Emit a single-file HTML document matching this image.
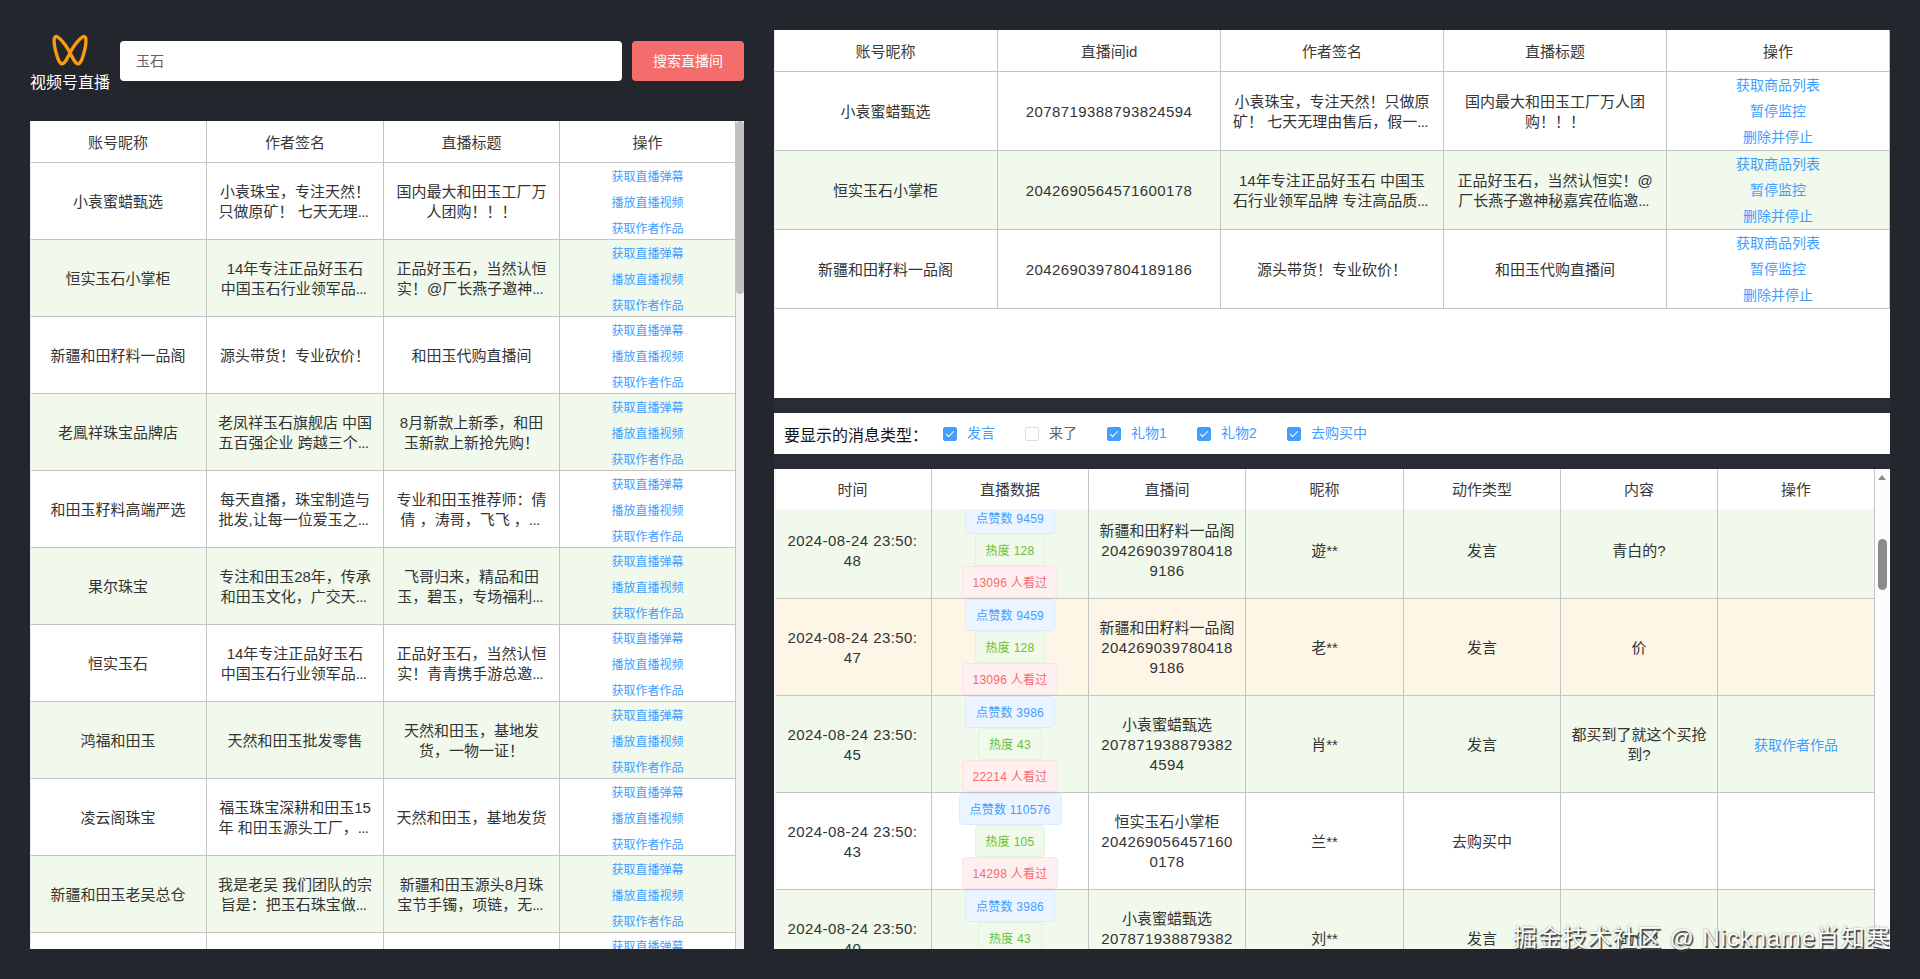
<!DOCTYPE html>
<html lang="zh-CN"><head><meta charset="utf-8"><title>视频号直播</title>
<style>
*{box-sizing:border-box;margin:0;padding:0}
html,body{width:1920px;height:979px;overflow:hidden;background:#24262e}
body{font-family:"Liberation Sans","Noto Sans CJK SC",sans-serif;font-size:15px;color:#333;position:relative}
.abs{position:absolute}
#logo{left:45px;top:28px;width:50px;height:44px}
#brand{left:20px;top:71.5px;width:100px;text-align:center;color:#fff;font-size:16px;line-height:22px;white-space:nowrap}
#q{left:120px;top:41px;width:502px;height:40px;background:#fff;border-radius:4px;color:#606266;font-size:14px;line-height:40px;padding-left:16px}
#btn{left:632px;top:41px;width:112px;height:40px;background:#f56c6c;border-radius:4px;color:#fff;font-size:14px;line-height:40px;text-align:center}
.panel{background:#fff;overflow:hidden}
#lp{left:30px;top:121px;width:714px;height:828px}
#rp{left:774px;top:30px;width:1116px;height:368px}
#bar{left:774px;top:413px;width:1116px;height:41px}
#bp{left:774px;top:469px;width:1116px;height:480px}
table{border-collapse:separate;border-spacing:0;table-layout:fixed}
td,th{border-right:1px solid #c4c4c4;border-bottom:1px solid #c4c4c4;text-align:center;vertical-align:middle;font-weight:400;line-height:20px;white-space:nowrap;overflow:hidden;padding:0}
th{color:#3a3a3a}
tr.g td{background:#f0f9eb}
tr.w td{background:#fdf5e6}
a{color:#409eff;text-decoration:none;display:block}
#lt{width:706px;border-left:0}
#lt th{height:42px}
#lt td{height:77px}
#lt a{font-size:12px;line-height:26px;height:26px}
#lt a:last-child{height:24px}
td,th{padding-top:2px}
td.op{padding-top:0}
#lt a{position:relative;top:1px}
#rt{width:1116px}
#rt th{height:42px}
#rt td{height:79px}
#rt a{font-size:14px;line-height:26px}
#bt{width:1101px}
#bth th{height:40px;border-bottom:0}
#bt td{height:97px}
#bt a{font-size:14px}
.tag{letter-spacing:.25px;display:block;height:32px;line-height:33px;font-size:12px;border:1px solid;border-radius:4px;padding:0 10px;margin:0 auto;width:max-content}
.tb{background:#ecf5ff;border-color:#d9ecff;color:#409eff}
.tg{background:#f0f9eb;border-color:#e1f3d8;color:#67c23a}
.tr{background:#fef0f0;border-color:#fde2e2;color:#f56c6c}
.n{letter-spacing:.43px}
i{font-style:normal;letter-spacing:-.6px;margin-right:3px}
.lb{position:absolute;left:0;top:0;width:1px;height:100%;background:#ebeef5}
#barl{left:10px;top:1px;line-height:43px;font-size:16px;color:#111}
.cb{top:14px;width:14px;height:14px;border:1px solid #dcdfe6;border-radius:2px;background:#fff}
.cb.on{background:#409eff;border-color:#409eff}
.cb.on:after{content:"";position:absolute;left:4px;top:1px;width:3px;height:7px;border:1.5px solid #fff;border-left:0;border-top:0;transform:rotate(45deg)}
.cl{top:0;line-height:41px;font-size:14px;color:#606266;white-space:nowrap}
.cl.on{color:#409eff}
#wm{left:1513px;top:922px;font-size:24px;letter-spacing:.85px;line-height:32px;color:#fbfbfb;white-space:nowrap;text-shadow:1.5px 1.5px 1px #3a3a3a,0 0 2px rgba(0,0,0,.4)}
</style></head><body>
<svg class="abs" id="logo" viewBox="0 0 1112 979" fill="none" stroke="#f99c13" stroke-width="74" stroke-linejoin="round"><path d="M370 798C355 794 338.3 776.8 325 758C311.7 739.2 300.5 711.3 290 685C279.5 658.7 273.3 639.2 262 600C250.7 560.8 231.8 500 222 450C212.2 400 205 338.3 203 300C201 261.7 202.2 238.8 210 220C217.8 201.2 231 184.5 250 187C269 189.5 296.7 211.2 324 235C351.3 258.8 385.7 295.8 414 330C442.3 364.2 470.2 402.5 494 440C517.8 477.5 537 518.3 557 555C577 591.7 597.5 630 614 660C630.5 690 641.8 714.7 656 735C670.2 755.3 684.3 771.5 699 782C713.7 792.5 729 802 744 798C759 794 775.7 776.8 789 758C802.3 739.2 813.5 711.3 824 685C834.5 658.7 840.7 639.2 852 600C863.3 560.8 882.2 500 892 450C901.8 400 909 338.3 911 300C913 261.7 911.8 238.8 904 220C896.2 201.2 883 184.5 864 187C845 189.5 817.3 211.2 790 235C762.7 258.8 728.3 295.8 700 330C671.7 364.2 643.8 402.5 620 440C596.2 477.5 577 518.3 557 555C537 591.7 516.5 630 500 660C483.5 690 472.2 714.7 458 735C443.8 755.3 429.7 771.5 415 782C400.3 792.5 385 802 370 798Z"/></svg>
<div class="abs" id="brand">视频号直播</div>
<div class="abs" id="q">玉石</div>
<div class="abs" id="btn">搜索直播间</div>
<div class="abs panel" id="lp">
<table id="lt"><colgroup><col style="width:177px"><col style="width:177px"><col style="width:176px"><col style="width:176px"></colgroup>
<tr><th>账号昵称</th><th>作者签名</th><th>直播标题</th><th>操作</th></tr>
<tr><td>小袁蜜蜡甄选</td><td>小袁珠宝，专注天然！<br>只做原矿！ 七天无理<i>...</i></td><td>国内最大和田玉工厂万<br>人团购！！！</td><td class="op"><a>获取直播弹幕</a><a>播放直播视频</a><a>获取作者作品</a></td></tr>
<tr class="g"><td>恒实玉石小掌柜</td><td>14年专注正品好玉石<br>中国玉石行业领军品<i>...</i></td><td>正品好玉石，当然认恒<br>实！@厂长燕子邀神<i>...</i></td><td class="op"><a>获取直播弹幕</a><a>播放直播视频</a><a>获取作者作品</a></td></tr>
<tr><td>新疆和田籽料一品阁</td><td>源头带货！专业砍价！</td><td>和田玉代购直播间</td><td class="op"><a>获取直播弹幕</a><a>播放直播视频</a><a>获取作者作品</a></td></tr>
<tr class="g"><td>老鳯祥珠宝品牌店</td><td>老凤祥玉石旗舰店 中国<br>五百强企业 跨越三个<i>...</i></td><td>8月新款上新季，和田<br>玉新款上新抢先购！</td><td class="op"><a>获取直播弹幕</a><a>播放直播视频</a><a>获取作者作品</a></td></tr>
<tr><td>和田玉籽料高端严选</td><td>每天直播，珠宝制造与<br>批发,让每一位爱玉之<i>...</i></td><td>专业和田玉推荐师：倩<br>倩 ，涛哥，飞飞 ，<i>...</i></td><td class="op"><a>获取直播弹幕</a><a>播放直播视频</a><a>获取作者作品</a></td></tr>
<tr class="g"><td>果尔珠宝</td><td>专注和田玉28年，传承<br>和田玉文化，广交天<i>...</i></td><td>飞哥归来，精品和田<br>玉，碧玉，专场福利<i>...</i></td><td class="op"><a>获取直播弹幕</a><a>播放直播视频</a><a>获取作者作品</a></td></tr>
<tr><td>恒实玉石</td><td>14年专注正品好玉石<br>中国玉石行业领军品<i>...</i></td><td>正品好玉石，当然认恒<br>实！青青携手游总邀<i>...</i></td><td class="op"><a>获取直播弹幕</a><a>播放直播视频</a><a>获取作者作品</a></td></tr>
<tr class="g"><td>鸿福和田玉</td><td>天然和田玉批发零售</td><td>天然和田玉，基地发<br>货，一物一证！</td><td class="op"><a>获取直播弹幕</a><a>播放直播视频</a><a>获取作者作品</a></td></tr>
<tr><td>凌云阁珠宝</td><td>福玉珠宝深耕和田玉15<br>年 和田玉源头工厂，<i>...</i></td><td>天然和田玉，基地发货</td><td class="op"><a>获取直播弹幕</a><a>播放直播视频</a><a>获取作者作品</a></td></tr>
<tr class="g"><td>新疆和田玉老吴总仓</td><td>我是老吴 我们团队的宗<br>旨是：把玉石珠宝做<i>...</i></td><td>新疆和田玉源头8月珠<br>宝节手镯，项链，无<i>...</i></td><td class="op"><a>获取直播弹幕</a><a>播放直播视频</a><a>获取作者作品</a></td></tr>
<tr><td>和田玉源头直播</td><td>源头好玉 品质保证</td><td>和田玉专场直播</td><td class="op"><a>获取直播弹幕</a><a>播放直播视频</a><a>获取作者作品</a></td></tr>
</table>
<div class="lb"></div>
<div class="abs" style="right:0;top:0;width:8px;height:828px;background:#f1f1f1"></div>
<div class="abs" style="right:0;top:0;width:8px;height:173px;background:#c1c1c1;border-radius:4px"></div>
</div>
<div class="abs" style="left:774px;top:398px;width:1116px;height:71px;background:#2a2c35"></div>
<div class="abs panel" id="rp">
<table id="rt"><colgroup><col style="width:224px"><col style="width:223px"><col style="width:223px"><col style="width:223px"><col style="width:223px"></colgroup>
<tr><th>账号昵称</th><th>直播间id</th><th>作者签名</th><th>直播标题</th><th>操作</th></tr>
<tr><td>小袁蜜蜡甄选</td><td><span class="n">2078719388793824594</span></td><td>小袁珠宝，专注天然！只做原<br>矿！ 七天无理由售后，假一<i>...</i></td><td>国内最大和田玉工厂万人团<br>购！！！</td><td class="op"><a>获取商品列表</a><a>暂停监控</a><a>删除并停止</a></td></tr>
<tr class="g"><td>恒实玉石小掌柜</td><td><span class="n">2042690564571600178</span></td><td>14年专注正品好玉石 中国玉<br>石行业领军品牌 专注高品质<i>...</i></td><td>正品好玉石，当然认恒实！@<br>厂长燕子邀神秘嘉宾莅临邀<i>...</i></td><td class="op"><a>获取商品列表</a><a>暂停监控</a><a>删除并停止</a></td></tr>
<tr><td>新疆和田籽料一品阁</td><td><span class="n">2042690397804189186</span></td><td>源头带货！专业砍价！</td><td>和田玉代购直播间</td><td class="op"><a>获取商品列表</a><a>暂停监控</a><a>删除并停止</a></td></tr>
</table>
<div class="lb"></div>
</div>
<div class="abs panel" id="bar"><div class="abs" id="barl">要显示的消息类型：</div><div class="abs cb on" style="left:169px"></div><div class="abs cl on" style="left:193px">发言</div><div class="abs cb" style="left:251px"></div><div class="abs cl" style="left:275px">来了</div><div class="abs cb on" style="left:333px"></div><div class="abs cl on" style="left:357px">礼物1</div><div class="abs cb on" style="left:423px"></div><div class="abs cl on" style="left:447px">礼物2</div><div class="abs cb on" style="left:513px"></div><div class="abs cl on" style="left:537px">去购买中</div></div>
<div class="abs panel" id="bp">
<div class="abs" style="left:0;top:40px;width:1101px;height:440px;overflow:hidden">
<table id="bt" style="margin-top:-7px"><colgroup><col style="width:158px"><col style="width:157px"><col style="width:157px"><col style="width:158px"><col style="width:157px"><col style="width:157px"><col style="width:157px"></colgroup>
<tr class="g"><td><span class="n">2024-08-24 23:50:<br>48</span></td><td class="op"><span class="tag tb">点赞数 9459</span><span class="tag tg">热度 128</span><span class="tag tr">13096 人看过</span></td><td>新疆和田籽料一品阁<br><span class="n">204269039780418<br>9186</span></td><td>遊**</td><td>发言</td><td>青白的?</td><td></td></tr>
<tr class="w"><td><span class="n">2024-08-24 23:50:<br>47</span></td><td class="op"><span class="tag tb">点赞数 9459</span><span class="tag tg">热度 128</span><span class="tag tr">13096 人看过</span></td><td>新疆和田籽料一品阁<br><span class="n">204269039780418<br>9186</span></td><td>老**</td><td>发言</td><td>价</td><td></td></tr>
<tr class="g"><td><span class="n">2024-08-24 23:50:<br>45</span></td><td class="op"><span class="tag tb">点赞数 3986</span><span class="tag tg">热度 43</span><span class="tag tr">22214 人看过</span></td><td>小袁蜜蜡甄选<br><span class="n">207871938879382<br>4594</span></td><td>肖**</td><td>发言</td><td>都买到了就这个买抢<br>到?</td><td><a>获取作者作品</a></td></tr>
<tr><td><span class="n">2024-08-24 23:50:<br>43</span></td><td class="op"><span class="tag tb">点赞数 110576</span><span class="tag tg">热度 105</span><span class="tag tr">14298 人看过</span></td><td>恒实玉石小掌柜<br><span class="n">204269056457160<br>0178</span></td><td>兰**</td><td>去购买中</td><td></td><td></td></tr>
<tr class="g"><td><span class="n">2024-08-24 23:50:<br>40</span></td><td class="op"><span class="tag tb">点赞数 3986</span><span class="tag tg">热度 43</span><span class="tag tr">22214 人看过</span></td><td>小袁蜜蜡甄选<br><span class="n">207871938879382<br>4594</span></td><td>刘**</td><td>发言</td><td>的价?</td><td></td></tr>
</table>
</div>
<div class="abs" style="left:0;top:0;width:1101px;height:40px;background:#fff"><table id="bth" style="width:1101px"><colgroup><col style="width:158px"><col style="width:157px"><col style="width:157px"><col style="width:158px"><col style="width:157px"><col style="width:157px"><col style="width:157px"></colgroup><tr><th>时间</th><th>直播数据</th><th>直播间</th><th>昵称</th><th>动作类型</th><th>内容</th><th>操作</th></tr></table></div>
<div class="lb" style="width:2px;background:#f6f8f6"></div>
<div class="abs" style="left:1101px;top:0;width:15px;height:480px;background:#fcfcfc"></div>
<div class="abs" style="left:1104px;top:6px;width:0;height:0;border-left:4.5px solid transparent;border-right:4.5px solid transparent;border-bottom:5px solid #8b8b8b"></div>
<div class="abs" style="left:1104px;top:70px;width:9px;height:51px;background:#8b8b8b;border-radius:4.5px"></div>
</div>
<div class="abs" id="wm">掘金技术社区 @ Nickname肖知寒</div>
</body></html>
